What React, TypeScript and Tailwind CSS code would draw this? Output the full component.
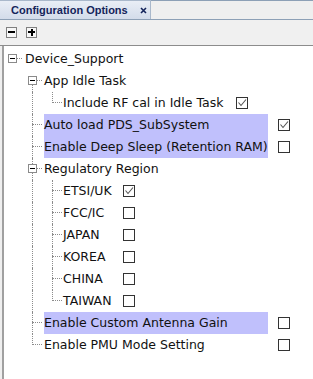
import React from "react";

type Seg = "none" | "full" | "tee" | "ell" | "handle" | "handleDown" | "handleFull" | "rootHandle";

function Handle({ left }: { left: string }) {
  return (
    <div className={`absolute ${left} top-[6px] w-[9px] h-[9px] border border-[#8a8a8a] bg-white flex items-center justify-center`}>
      <div className="w-[5px] h-[1px] bg-black" />
    </div>
  );
}

function Cell({ seg, first }: { seg: Seg; first?: boolean }) {
  const w = first ? "w-[18px]" : "w-[20px]";
  const lx = first ? "left-[8px]" : "left-[10px]";
  const hx = first ? "left-[4px]" : "left-[6px]";
  return (
    <div className={`relative ${w} h-full shrink-0`}>
      {(seg === "full" || seg === "tee" || seg === "handleFull") && (
        <div className={`absolute ${lx} top-0 bottom-0 border-l border-dotted border-[#8c8c8c]`} />
      )}
      {seg === "ell" && (
        <div className={`absolute ${lx} top-0 h-[11px] border-l border-dotted border-[#8c8c8c]`} />
      )}
      {seg === "handleDown" && (
        <div className={`absolute ${lx} top-[11px] bottom-0 border-l border-dotted border-[#8c8c8c]`} />
      )}
      {(seg === "tee" || seg === "ell" || seg === "handleDown" || seg === "handleFull" || seg === "rootHandle") && (
        <div className={`absolute ${lx} right-0 top-[10px] border-t border-dotted border-[#8c8c8c]`} />
      )}
      {(seg === "handleDown" || seg === "handleFull" || seg === "rootHandle") && <Handle left={hx} />}
    </div>
  );
}

function Check({ checked }: { checked: boolean }) {
  return (
    <div className="w-[12px] h-[12px] border border-[#333333] bg-white shrink-0 flex items-center justify-center">
      {checked && (
        <svg width="10" height="10" viewBox="0 0 10 10">
          <polyline points="1.5,4.5 4,7.5 9,1.5" fill="none" stroke="#555555" strokeWidth="1.1" />
        </svg>
      )}
    </div>
  );
}

type Row = {
  segs: Seg[];
  text: string;
  level: 0 | 1 | 2;
  labelW?: string;
  check?: boolean;
  hl?: boolean;
};

const rows: Row[] = [
  { segs: ["rootHandle"], text: "Device_Support", level: 0 },
  { segs: ["none", "handleDown"], text: "App Idle Task", level: 1 },
  { segs: ["none", "full", "ell"], text: "Include RF cal in Idle Task", level: 2, labelW: "w-[163px]", check: true },
  { segs: ["none", "tee"], text: "Auto load PDS_SubSystem", level: 1, labelW: "w-[224px]", check: true, hl: true },
  { segs: ["none", "tee"], text: "Enable Deep Sleep (Retention RAM)", level: 1, labelW: "w-[224px]", check: false, hl: true },
  { segs: ["none", "handleFull"], text: "Regulatory Region", level: 1 },
  { segs: ["none", "full", "tee"], text: "ETSI/UK", level: 2, labelW: "w-[50px]", check: true },
  { segs: ["none", "full", "tee"], text: "FCC/IC", level: 2, labelW: "w-[50px]", check: false },
  { segs: ["none", "full", "tee"], text: "JAPAN", level: 2, labelW: "w-[50px]", check: false },
  { segs: ["none", "full", "tee"], text: "KOREA", level: 2, labelW: "w-[50px]", check: false },
  { segs: ["none", "full", "tee"], text: "CHINA", level: 2, labelW: "w-[50px]", check: false },
  { segs: ["none", "full", "ell"], text: "TAIWAN", level: 2, labelW: "w-[50px]", check: false },
  { segs: ["none", "tee"], text: "Enable Custom Antenna Gain", level: 1, labelW: "w-[224px]", check: false, hl: true },
  { segs: ["none", "ell"], text: "Enable PMU Mode Setting", level: 1, labelW: "w-[224px]", check: false },
];

export default function App() {
  return (
    <div className="w-[313px] h-[379px] bg-[#efefef] flex flex-col overflow-hidden" style={{ fontFamily: '"DejaVu Sans", sans-serif' }}>
      {/* header */}
      <div className="h-[20px] flex shrink-0 border-b border-[#8da0b6]">
        <div
          className="w-[151px] h-full flex items-center border-r border-t border-[#a9b8cb] bg-gradient-to-b from-[#e9eef6] to-[#d3dcea] pl-[11px]"
          style={{ fontFamily: '"Liberation Sans", Arial, sans-serif' }}
        >
          <span className="text-[11px] font-bold text-[#14245a] leading-none">Configuration Options</span>
          <svg width="7" height="7" viewBox="0 0 7 7" className="ml-[12px]">
            <path d="M1 1L6 6M6 1L1 6" stroke="#14245a" strokeWidth="1.6" />
          </svg>
        </div>
        <div className="flex-1 h-full border-t border-[#8da0b6] bg-[#efefef]" />
      </div>
      {/* toolbar */}
      <div className="h-[26px] shrink-0 flex items-center gap-[9px] pl-[6px] pb-[1px] border-b border-[#8c8c8c] bg-[#f0f0f0]">
        <div className="w-[11px] h-[11px] border border-[#808080] bg-[#f7f7f7] flex items-center justify-center">
          <div className="w-[7px] h-[2px] bg-black" />
        </div>
        <div className="w-[11px] h-[11px] border border-[#808080] bg-[#f7f7f7] relative flex items-center justify-center">
          <div className="w-[7px] h-[2px] bg-black" />
          <div className="absolute w-[2px] h-[7px] bg-black" />
        </div>
      </div>
      {/* tree */}
      <div className="flex-1 ml-[2px] border-l-2 border-[#a0a0a0] bg-white pt-[2px] text-[12.5px] text-[#111111]">
        {rows.map((r, i) => (
          <div key={i} className="flex h-[22px] items-stretch">
            {r.segs.map((s, j) => (
              <Cell key={j} seg={s} first={j === 0} />
            ))}
            <div
              className={`${r.labelW ?? ""} ${r.level === 0 ? "ml-[3px]" : r.level === 1 ? "ml-[2px]" : "ml-[1px]"} ${
                r.hl ? "bg-[#c0c0fc]" : ""
              } flex items-center whitespace-nowrap shrink-0`}
            >
              {r.text}
            </div>
            {r.check !== undefined && (
              <div className="ml-[10px] flex items-center">
                <Check checked={r.check} />
              </div>
            )}
          </div>
        ))}
      </div>
    </div>
  );
}
